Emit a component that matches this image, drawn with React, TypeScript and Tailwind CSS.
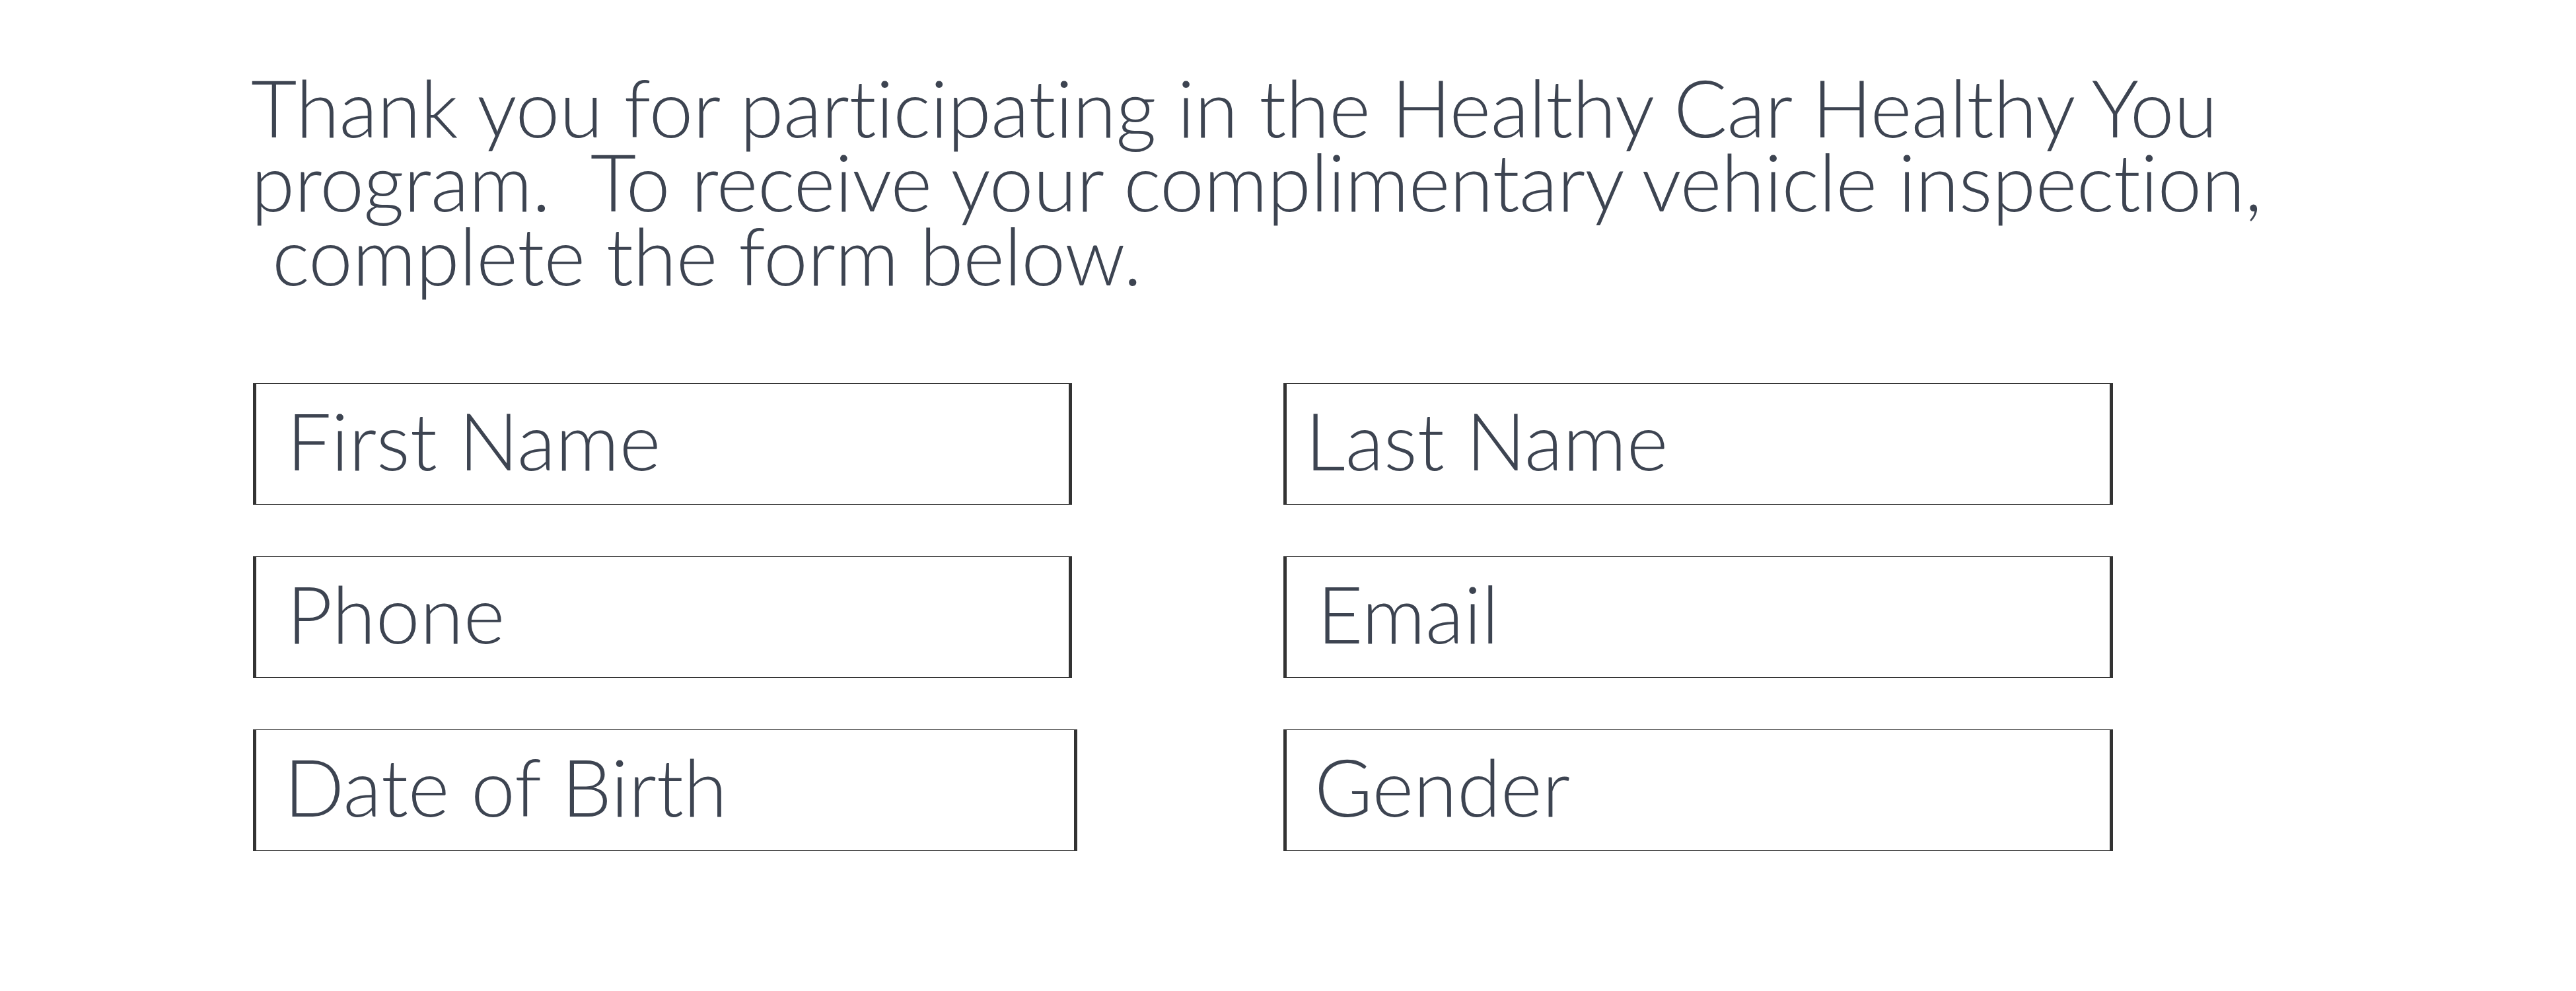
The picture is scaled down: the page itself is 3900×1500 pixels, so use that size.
import React from 'react';

interface FieldProps {
    label: string;
    padLeft: string;
    width: string;
}

const Field: React.FC<FieldProps> = ({ label, padLeft, width }) => {
    return (
        <div className={`h-[184px] ${width} border-l-[5px] border-r-[5px] border-t border-b border-[#333333] bg-white pt-[29px] ${padLeft}`}>
            <span className="block text-[120px] leading-[112px] font-light text-[#3d4451]">{label}</span>
        </div>
    );
};

const App: React.FC = () => {
    return (
        <div className="min-h-[1500px] w-[3900px] bg-white [font-variant-ligatures:none]" style={{ fontFamily: 'Lato, "Noto Sans", sans-serif' }}>
            <div className="flex flex-col pl-[380px] pt-[106px]">
                <h1 className="text-[120px] leading-[112px] font-light tracking-[-0.5px] text-[#3d4451] whitespace-pre">
                    Thank you for participating in the Healthy Car Healthy You<br />
                    program.  To receive your complimentary vehicle inspection,<br />
                    {' '}complete the form below.
                </h1>

                <div className="mt-[138px] grid grid-cols-[1244px_1256px] gap-x-[316px] gap-y-[78px] pl-[3px]">
                    <Field label="First Name" padLeft="pl-[46px]" width="w-[1240px]" />
                    <Field label="Last Name" padLeft="pl-[28px]" width="w-[1256px]" />
                    <Field label="Phone" padLeft="pl-[46px]" width="w-[1240px]" />
                    <Field label="Email" padLeft="pl-[46px]" width="w-[1256px]" />
                    <Field label="Date of Birth" padLeft="pl-[42px]" width="w-[1248px]" />
                    <Field label="Gender" padLeft="pl-[42px]" width="w-[1256px]" />
                </div>
            </div>
        </div>
    );
};

export default App;
